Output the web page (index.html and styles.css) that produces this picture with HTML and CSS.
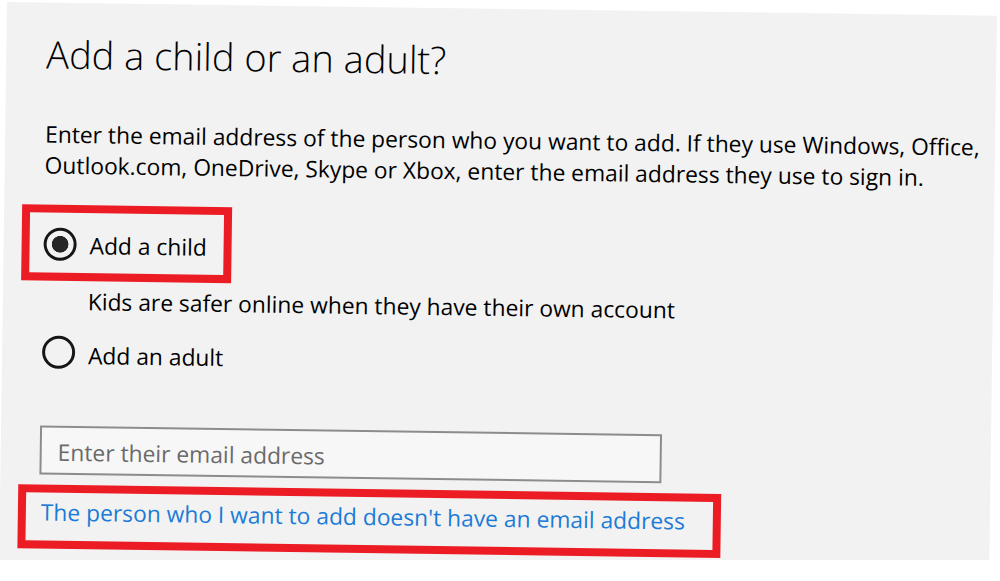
FILE: index.html
```html
<!DOCTYPE html>
<html lang="en">
<head>
  <meta charset="UTF-8" />
  <meta name="viewport" content="width=device-width, initial-scale=1.0"/>
  <title>Add a child or an adult?</title>
  <link rel="stylesheet" href="styles.css">
</head>
<body>

  <div class="panel">
    <h1 class="title">Add a child or an adult?</h1>
    <p class="intro">Enter the email address of the person who you want to add. If they use Windows, Office,<br>Outlook.com, OneDrive, Skype or Xbox, enter the email address they use to sign in.</p>

    <div class="options">
      <label class="option marked">
        <input type="radio" name="who" value="child" checked>
        <span>Add a child</span>
      </label>
      <p class="hint">Kids are safer online when they have their own account</p>
      <label class="option">
        <input type="radio" name="who" value="adult">
        <span>Add an adult</span>
      </label>
    </div>

    <input class="email" type="text" placeholder="Enter their email address">

    <div class="marked link-box">
      <a href="#">The person who I want to add doesn't have an email address</a>
    </div>
  </div>

</body>
</html>
```

FILE: styles.css
```css
html, body {
  margin: 0;
  background-color: #ffffff;
  overflow: hidden;
}

body {
  font-family: "Open Sans", "Noto Sans", sans-serif;
  color: #000000;
}

/* the screenshot is tilted a little */
.panel {
  box-sizing: border-box;
  width: 990px;
  height: 558px;
  margin: 2px 0 0 7px;
  padding: 29px 6px 0 40px;
  background-color: #f2f2f2;
  transform: rotate(0.8deg);
  transform-origin: 0 0;
}

.title {
  margin: 0;
  font-size: 38px;
  font-weight: 300;
  line-height: 44px;
}

.intro {
  margin: 43px 0 0;
  font-size: 22.8px;
  line-height: 31px;
  white-space: nowrap;
}

.options {
  font-size: 22.8px;
  line-height: 31px;
}

.option {
  display: flex;
  align-items: flex-start;
  margin-top: 19px;
  cursor: pointer;
}

.option span {
  margin: 4px 0 0 13px;
}

.option input {
  appearance: none;
  -webkit-appearance: none;
  box-sizing: border-box;
  width: 33px;
  height: 33px;
  margin: 0;
  border: 3.5px solid #161616;
  border-radius: 50%;
  background-color: transparent;
  flex-shrink: 0;
}

.option input:checked {
  background: radial-gradient(circle, #262626 0 8px, transparent 8.6px);
}

/* red highlight boxes */
.marked {
  box-sizing: border-box;
  border: 8px solid #ec1c24;
  margin-left: -22px;
}

.option.marked {
  width: 210px;
  height: 76px;
  margin-top: 24px;
  padding-left: 14px;
}

.option.marked input {
  margin-top: 15px;
}

.option.marked span {
  margin-top: 17px;
}

.hint {
  margin: 5px 0 0 45px;
}

.email {
  display: block;
  box-sizing: border-box;
  width: 622px;
  height: 49px;
  margin: 55px 0 0 -1px;
  padding: 9px 16px 5px;
  border: 2px solid #8c8c8c;
  border-radius: 0;
  background-color: #f7f7f7;
  font-family: "Open Sans", "Noto Sans", sans-serif;
  font-size: 22.8px;
  line-height: 31px;
  color: #000000;
  outline: none;
}

.email::placeholder {
  color: #6a6a6a;
}

.link-box {
  width: 703px;
  height: 64px;
  margin-top: 10px;
  padding: 4px 0 0 15px;
  font-size: 22.8px;
  line-height: 31px;
}

.link-box a {
  color: #1b7bd6;
  text-decoration: none;
}
```
